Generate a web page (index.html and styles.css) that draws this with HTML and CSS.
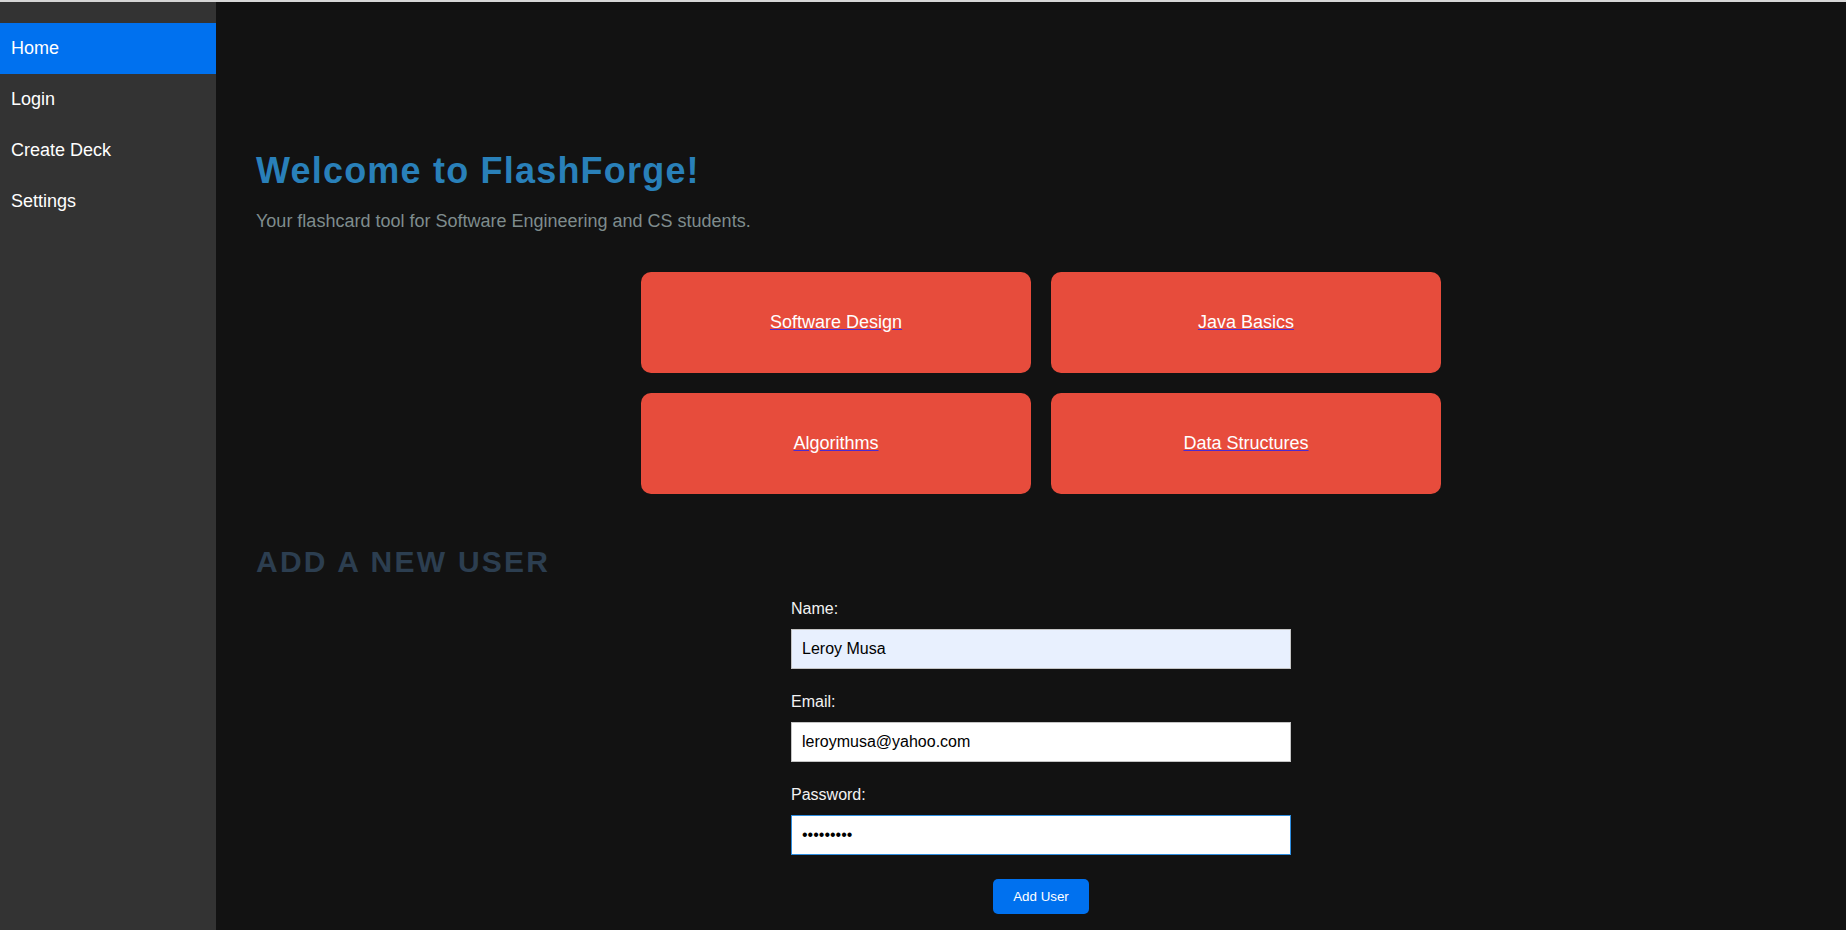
FILE: index.html
```html
<!DOCTYPE html>
<html lang="en">
<head>
<meta charset="utf-8">
<title>FlashForge</title>
<link rel="stylesheet" href="styles.css">
</head>
<body>
<div class="top-strip"></div>
<div class="layout">
  <nav class="sidebar">
    <a class="nav-item active" href="#">Home</a>
    <a class="nav-item" href="#">Login</a>
    <a class="nav-item" href="#">Create Deck</a>
    <a class="nav-item" href="#">Settings</a>
  </nav>
  <main class="main">
    <h1 class="title">Welcome to FlashForge!</h1>
    <p class="subtitle">Your flashcard tool for Software Engineering and CS students.</p>

    <div class="deck-grid">
      <a class="deck-card" href="#"><span class="deck-name">Software Design</span></a>
      <a class="deck-card" href="#"><span class="deck-name">Java Basics</span></a>
      <a class="deck-card" href="#"><span class="deck-name">Algorithms</span></a>
      <a class="deck-card" href="#"><span class="deck-name">Data Structures</span></a>
    </div>

    <h2 class="section-title">Add a New User</h2>

    <form class="user-form">
      <div class="form-group">
        <label class="form-label" for="name">Name:</label>
        <input class="form-input autofilled" id="name" type="text" value="Leroy Musa">
      </div>
      <div class="form-group">
        <label class="form-label" for="email">Email:</label>
        <input class="form-input" id="email" type="email" value="leroymusa@yahoo.com">
      </div>
      <div class="form-group">
        <label class="form-label" for="password">Password:</label>
        <input class="form-input focused" id="password" type="password" value="123456789">
      </div>
      <div class="form-actions">
        <button class="submit-btn" type="button">Add User</button>
      </div>
    </form>
  </main>
</div>
</body>
</html>
```

FILE: styles.css
```css
html, body {
  margin: 0;
  padding: 0;
  height: 100%;
  overflow: hidden;
}

body {
  background: #121212;
  font-family: "Liberation Sans", Arial, sans-serif;
}

.top-strip {
  height: 2px;
  background: #d6d6d6;
}

.layout {
  display: flex;
  min-height: calc(100vh - 2px);
}

.sidebar {
  width: 216px;
  flex: 0 0 216px;
  background: #333333;
  padding-top: 21px;
  display: flex;
  flex-direction: column;
}

.nav-item {
  display: block;
  padding: 15px 10px 15px 11px;
  font-size: 18px;
  color: #ffffff;
  text-decoration: none;
}

.nav-item.active {
  background: #0071ef;
}

.main {
  flex: 1;
  padding: 148px 20px 0 40px;
}

.title {
  margin: 0 0 19px;
  font-size: 36px;
  font-weight: bold;
  letter-spacing: 1.2px;
  color: #2980b9;
}

.subtitle {
  margin: 0 0 40px;
  font-size: 18px;
  color: #7f8c8d;
}

.deck-grid {
  width: 800px;
  margin: 0 auto;
  display: grid;
  grid-template-columns: 1fr 1fr;
  gap: 20px;
}

.deck-card {
  display: block;
  background: #e74c3c;
  border-radius: 10px;
  padding: 40px 20px;
  text-align: center;
  font-size: 18px;
  text-decoration: none;
}

.deck-name {
  color: #ffffff;
  text-decoration: underline;
  text-decoration-color: #4b2bd2;
}

.section-title {
  margin: 51px 0 21px;
  font-size: 30px;
  font-weight: bold;
  letter-spacing: 2.25px;
  text-transform: uppercase;
  color: #2c3e50;
}

.user-form {
  width: 500px;
  margin: 0 auto;
}

.form-group {
  margin-bottom: 24.5px;
}

.form-label {
  display: block;
  margin-bottom: 11px;
  font-size: 16px;
  color: #f2f2f2;
}

.form-input {
  display: block;
  box-sizing: border-box;
  width: 100%;
  height: 39.5px;
  padding: 0 10px;
  border: 1px solid #c4c4c4;
  background: #ffffff;
  font-family: "Liberation Sans", Arial, sans-serif;
  font-size: 16px;
  color: #000000;
  outline: none;
}

.form-input.autofilled {
  background: #e8f0fe;
}

.form-input.focused {
  border-color: #2f8ee0;
}

.form-actions {
  display: flex;
  justify-content: center;
}

.submit-btn {
  padding: 10px 20px;
  border: none;
  border-radius: 5px;
  background: #0071ef;
  color: #ffffff;
  font-family: "Liberation Sans", Arial, sans-serif;
  font-size: 13.333px;
}
```
